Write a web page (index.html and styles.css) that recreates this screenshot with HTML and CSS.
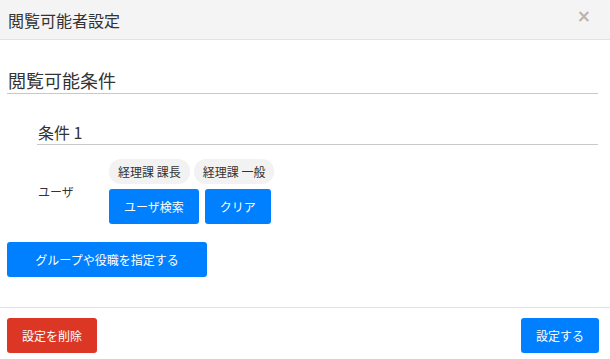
FILE: index.html
```html
<!DOCTYPE html>
<html lang="ja">
<head>
  <meta charset="UTF-8">
  <meta name="viewport" content="width=device-width, initial-scale=1.0">
  <title>閲覧可能者設定</title>
  <link rel="stylesheet" href="styles.css">
</head>
<body>
  <div class="modal">
    <!-- ヘッダー -->
    <div class="modal-header">
      <h2 class="modal-title">閲覧可能者設定</h2>
      <span class="close">&times;</span>
    </div>

    <!-- 本文 -->
    <div class="modal-body">
      <h3 class="section-title">閲覧可能条件</h3>

      <div class="condition">
        <h4 class="condition-title">条件 1</h4>
        <div class="condition-row">
          <div class="row-label">ユーザ</div>
          <div class="row-content">
            <div class="tags">
              <span class="tag">経理課 課長</span>
              <span class="tag">経理課 一般</span>
            </div>
            <div class="actions">
              <button class="btn btn-primary">ユーザ検索</button>
              <button class="btn btn-primary">クリア</button>
            </div>
          </div>
        </div>
      </div>

      <button class="btn btn-primary btn-wide">グループや役職を指定する</button>
    </div>

    <!-- フッター -->
    <div class="modal-footer">
      <button class="btn btn-danger">設定を削除</button>
      <button class="btn btn-primary">設定する</button>
    </div>
  </div>
</body>
</html>
```

FILE: styles.css
```css
body {
  font-family: 'Noto Sans CJK JP', 'Noto Sans', sans-serif;
  margin: 0;
  padding: 0;
  background-color: #fff;
  color: #333;
}
.modal {
  width: 610px;
}
.modal-header {
  display: flex;
  align-items: center;
  justify-content: space-between;
  height: 39px;
  padding: 0 19px 0 8px;
  background-color: #f4f4f4;
  border-bottom: 1px solid #e2e2e2;
}
.modal-title {
  margin: 0;
  font-size: 16px;
  font-weight: normal;
  line-height: 1;
}
.close {
  font-family: 'DejaVu Sans', sans-serif;
  font-size: 17px;
  font-weight: bold;
  color: #b5b5b5;
  line-height: 1;
  margin-top: -6px;
}
.modal-body {
  padding: 27px 12px 30px 7px;
}
.section-title {
  margin: 0;
  font-size: 18px;
  font-weight: normal;
  line-height: 26px;
  padding-left: 1px;
  border-bottom: 1px solid #c8c8c8;
}
.condition {
  padding-left: 30px;
  margin-top: 26px;
}
.condition-title {
  margin: 0;
  font-size: 16px;
  font-weight: normal;
  line-height: 24px;
  padding-left: 1px;
  border-bottom: 1px solid #c8c8c8;
}
.condition-row {
  display: flex;
  align-items: center;
  margin-top: 14px;
}
.row-label {
  box-sizing: border-box;
  width: 72px;
  font-size: 12px;
  padding-left: 1px;
}
.tags {
  display: flex;
  gap: 4px;
}
.tag {
  display: inline-flex;
  align-items: center;
  height: 25px;
  padding: 0 9px;
  font-size: 12px;
  background-color: #f2f2f2;
  border-radius: 12px;
}
.actions {
  display: flex;
  gap: 6px;
  margin-top: 5px;
}
.btn {
  font-family: inherit;
  font-size: 12px;
  height: 35px;
  padding: 0 15px;
  border: none;
  border-radius: 3px;
  color: #fff;
  cursor: pointer;
}
.btn-primary {
  background-color: #0080ff;
}
.btn-danger {
  background-color: #dc3624;
}
.btn-wide {
  width: 200px;
  margin-top: 18px;
  display: block;
}
.modal-footer {
  display: flex;
  justify-content: space-between;
  padding: 10px 11px 0 7px;
  border-top: 1px solid #e2e2e2;
}
```
